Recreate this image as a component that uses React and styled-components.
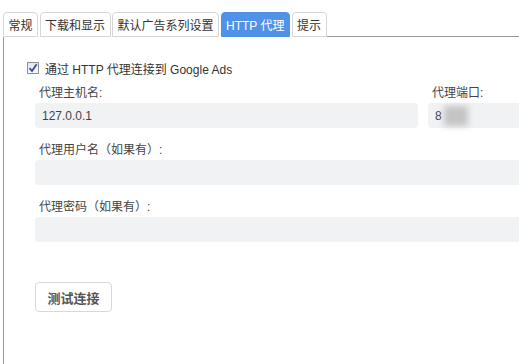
import styled, { createGlobalStyle } from "styled-components";

const GlobalStyle = createGlobalStyle`
  html, body {
    margin: 0;
    padding: 0;
    height: 100%;
    overflow: hidden;
    background: #fff;
  }
  #root {
    height: 100%;
  }
  * {
    box-sizing: border-box;
  }
`;

const Page = styled.div`
  height: 100%;
  display: flex;
  flex-direction: column;
  padding: 12px 0 0 3px;
  font-family: "Liberation Sans", "Noto Sans CJK SC", sans-serif;
  font-size: 12px;
  color: #333;
`;

const TabBar = styled.div`
  display: flex;
  align-items: flex-end;
  gap: 1.5px;
  height: 25px;
`;

const Tab = styled.div`
  height: 25px;
  display: flex;
  align-items: center;
  padding: 0 4.5px;
  border: 1px solid ${(p) => (p.$active ? "#4d90e6" : "#d6d6da")};
  border-radius: 4px 4px 0 0;
  background: ${(p) => (p.$active ? "#4f92e7" : "#fff")};
  color: ${(p) => (p.$active ? "#fff" : "#333")};
  white-space: nowrap;
`;

const TabFiller = styled.div`
  flex: 1;
  align-self: stretch;
  border-bottom: 1px solid #999;
  margin-left: -1px;
`;

const Panel = styled.div`
  flex: 1;
  border-left: 1px solid #9a9a9a;
  padding: 24px 0 0 22px;
  overflow: hidden;
`;

const CheckRow = styled.label`
  display: flex;
  align-items: center;
  gap: 6px;
  height: 14px;
  margin-left: 1px;
`;

const Box = styled.span`
  width: 12px;
  height: 12px;
  border: 1px solid #8f8f8f;
  background: linear-gradient(#e6e6e6, #fafafa);
  display: flex;
  align-items: center;
  justify-content: center;
`;

const Form = styled.div`
  width: 580px;
  margin-left: 9px;
  margin-top: 11px;
  display: flex;
  flex-direction: column;
  gap: 15px;
`;

const Row = styled.div`
  display: grid;
  grid-template-columns: ${(p) => p.$cols || "1fr"};
  column-gap: 10px;
`;

const Field = styled.div`
  display: flex;
  flex-direction: column;
  gap: 3px;
`;

const Label = styled.div`
  padding-left: 4px;
  color: #444;
  height: 14px;
  line-height: 14px;
`;

const Input = styled.div`
  height: 25px;
  border-radius: 4px;
  background: #f1f2f4;
  padding-left: 7px;
  display: flex;
  align-items: center;
  color: #444;
`;

const Blur = styled.span`
  display: inline-block;
  width: 24px;
  height: 20px;
  margin-left: 2px;
  background: #c4c4c4;
  filter: blur(3px);
`;

const Button = styled.button`
  display: block;
  margin: 40px 0 0 9px;
  width: 77px;
  height: 30px;
  border: 1px solid #d8d8d8;
  border-radius: 4px;
  background: #fff;
  font-family: "Liberation Sans", "Noto Sans CJK SC", sans-serif;
  font-size: 13px;
  font-weight: bold;
  color: #555;
  padding: 0;
`;

const tabs = ["常规", "下载和显示", "默认广告系列设置", "HTTP 代理", "提示"];

export default function App() {
  return (
    <Page>
      <GlobalStyle />
      <TabBar>
        {tabs.map((t) => (
          <Tab key={t} $active={t === "HTTP 代理"}>
            {t}
          </Tab>
        ))}
        <TabFiller />
      </TabBar>
      <Panel>
        <CheckRow>
          <Box>
            <svg width="10" height="10" viewBox="0 0 10 10">
              <path d="M1.5 5.2 L4 8 L8.6 1.2" stroke="#2a4fa8" strokeWidth="1.8" fill="none" />
            </svg>
          </Box>
          通过 HTTP 代理连接到 Google Ads
        </CheckRow>
        <Form>
          <Row $cols="383px 1fr">
            <Field>
              <Label>代理主机名:</Label>
              <Input>127.0.0.1</Input>
            </Field>
            <Field>
              <Label>代理端口:</Label>
              <Input>
                8<Blur />
              </Input>
            </Field>
          </Row>
          <Field>
            <Label>代理用户名（如果有）:</Label>
            <Input />
          </Field>
          <Field>
            <Label>代理密码（如果有）:</Label>
            <Input />
          </Field>
        </Form>
        <Button>测试连接</Button>
      </Panel>
    </Page>
  );
}
